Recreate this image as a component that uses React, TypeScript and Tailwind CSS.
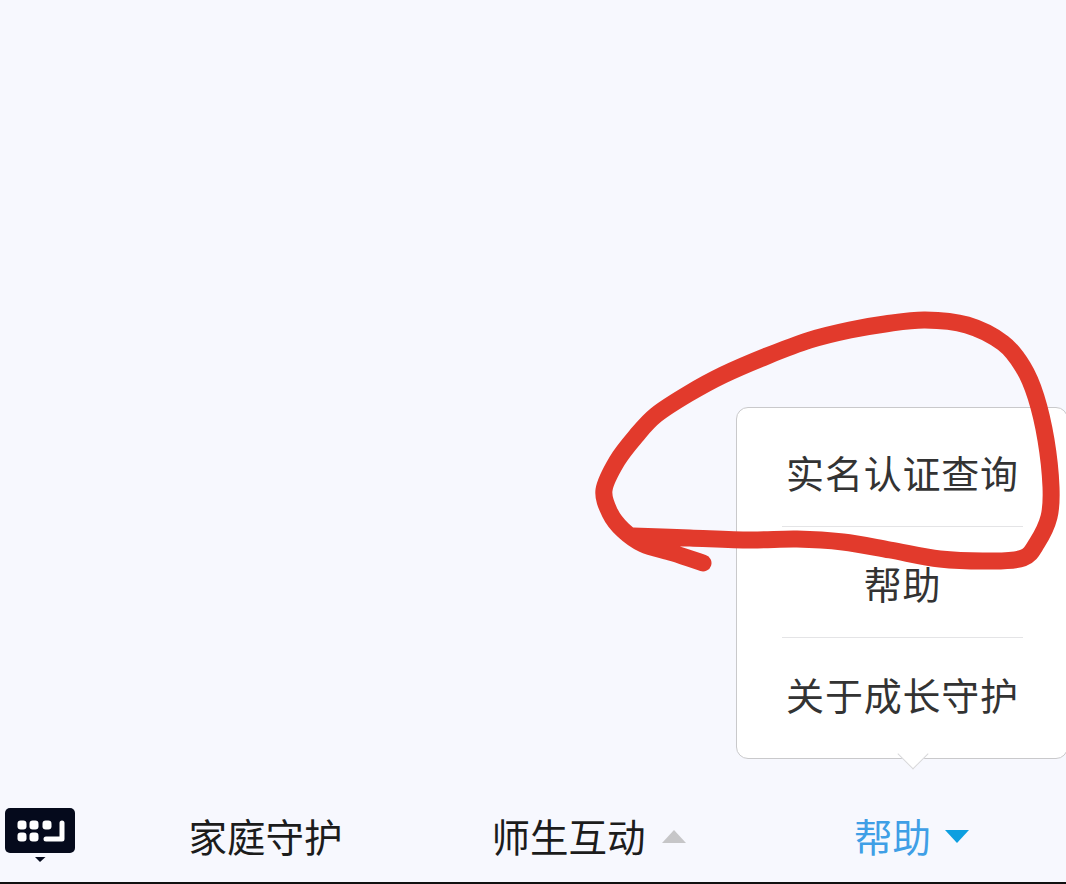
const FONT = "font-['Noto_Sans_CJK_SC','Noto_Sans',sans-serif]";

const pts: [number, number][] = [
  [703, 563], [673, 553], [643, 544], [623, 530], [610, 513], [604, 490], [617, 461], [636, 436], [656, 415], [688, 394], [723, 375],
  [767, 356], [810, 340], [850, 330], [885, 324], [925, 320], [967, 325], [1003, 343], [1023, 367], [1036, 397], [1046, 440],
  [1051, 487], [1049, 517], [1037, 543], [1023, 558], [990, 561], [940, 559], [890, 550], [843, 542],
  [797, 539], [750, 540], [690, 538], [633, 536],
];

function smooth(p: [number, number][]) {
  let d = `M${p[0][0]} ${p[0][1]}`;
  for (let i = 0; i < p.length - 1; i++) {
    const a = p[Math.max(i - 1, 0)];
    const b = p[i];
    const c = p[i + 1];
    const e = p[Math.min(i + 2, p.length - 1)];
    d += ` C${b[0] + (c[0] - a[0]) / 6} ${b[1] + (c[1] - a[1]) / 6} ${c[0] - (e[0] - b[0]) / 6} ${c[1] - (e[1] - b[1]) / 6} ${c[0]} ${c[1]}`;
  }
  return d;
}

function KeyboardIcon() {
  return (
    <svg width="70" height="56" viewBox="0 0 70 56" className="shrink-0">
      <rect x="0" y="0" width="70" height="45" rx="5" fill="#050a1c" />
      <g fill="#ffffff">
        <rect x="12.5" y="12.5" width="9" height="9" rx="3.2" />
        <rect x="24.5" y="12.5" width="9" height="9" rx="3.2" />
        <rect x="37.5" y="12.5" width="9" height="9" rx="3.2" />
        <rect x="12.5" y="24.5" width="9" height="9" rx="3.2" />
        <rect x="24.5" y="24.5" width="9" height="9" rx="3.2" />
      </g>
      <path d="M41 31H57V15" fill="none" stroke="#ffffff" strokeWidth="5" strokeLinecap="round" strokeLinejoin="round" />
      <path d="M30 49H40.5L35 54Z" fill="#050a1c" />
    </svg>
  );
}

function MenuItem({ label, divider }: { label: string; divider?: boolean }) {
  return (
    <div
      className={`h-[111px] ml-[45px] mr-[44px] flex items-center justify-center text-[38px] tracking-[0.8px] text-[#333333] ${
        divider ? "border-b border-[#e4e4e6]" : ""
      }`}
    >
      {label}
    </div>
  );
}

export default function App() {
  return (
    <div className={`relative w-[1066px] h-[884px] overflow-hidden bg-[#f7f8fe] flex flex-col justify-end ${FONT}`}>
      <div className="h-[76px] flex items-start pl-[5px] border-b-2 border-[#111111]">
        <KeyboardIcon />
        <div className="ml-[29px] w-[323px] shrink-0 flex justify-center items-center h-[55px] text-[38.5px] text-[#1c1c1c]">
          <span>家庭守护</span>
        </div>
        <div className="w-[323px] shrink-0 flex justify-center items-center h-[55px] text-[38.5px] text-[#1c1c1c]">
          <span>师生互动</span>
          <svg width="24" height="13" viewBox="0 0 24 13" className="ml-[16px] mt-[2px]">
            <path d="M12 0L24 13H0Z" fill="#c6c6c8" />
          </svg>
        </div>
        <div className="w-[323px] shrink-0 flex justify-center items-center h-[55px] text-[38.5px] text-[#3f9fe6]">
          <span>帮助</span>
          <svg width="24" height="13" viewBox="0 0 24 13" className="ml-[14px] mt-[2px]">
            <path d="M0 0H24L12 13Z" fill="#0d9fe0" />
          </svg>
        </div>
      </div>

      <div className="absolute left-[736px] top-[407px] w-[332px] h-[352px] rounded-[12px] border border-[#c9c9cb] bg-white py-[8px]">
        <MenuItem label="实名认证查询" divider />
        <MenuItem label="帮助" divider />
        <MenuItem label="关于成长守护" />
        <div className="absolute left-[165px] bottom-[-7px] w-[22px] h-[22px] rotate-45 bg-white border-r border-b border-[#d8d8da]" />
      </div>

      <svg className="absolute inset-0 pointer-events-none" width="1066" height="884" viewBox="0 0 1066 884">
        <path d={smooth(pts)} fill="none" stroke="#e23a2c" strokeWidth="17" strokeLinecap="round" strokeLinejoin="round" />
      </svg>
    </div>
  );
}
